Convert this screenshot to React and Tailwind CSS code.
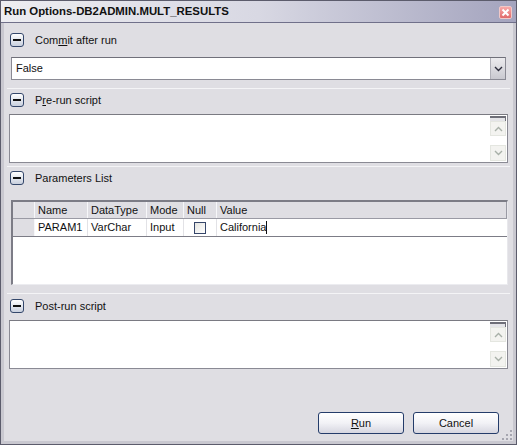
import React from "react";

const font = { fontFamily: '"Liberation Sans", Arial, sans-serif' };

const MinusIcon = () => (
  <div className="w-[14px] h-[14px] rounded-[3px] border border-[#34476b] bg-gradient-to-b from-white to-[#c9d0de] flex items-center justify-center shrink-0">
    <div className="w-[8px] h-[2px] bg-[#111]" />
  </div>
);

const SectionHeader = ({ children, className = "" }) => (
  <div className={`flex items-center h-[18px] pl-[6px] gap-[11px] text-[11px] text-[#111] ${className}`}>
    <MinusIcon />
    <span>{children}</span>
  </div>
);

const Chevron = ({ up, color = "#a8b0a8" }) => (
  <svg width="9" height="6" viewBox="0 0 9 6">
    <path d={up ? "M1 5 L4.5 1.5 L8 5" : "M1 1 L4.5 4.5 L8 1"} fill="none" stroke={color} strokeWidth="1.4" />
  </svg>
);

const ScrollBox = ({ className = "" }) => (
  <div className={`h-[49px] mx-[5px] bg-white border border-[#8a8a94] border-t-[#7a7a82] flex ${className}`}>
    <div className="flex-1" />
    <div className="w-[17px] flex flex-col py-[1px] pr-[1px]">
      <div className="h-[5px] border-t-2 border-r border-[#6e6e78] bg-[#e4e4e8]" />
      <div className="h-[15px] flex items-center justify-center bg-[#f3f3f0] border border-[#e4e6e0]">
        <Chevron up />
      </div>
      <div className="flex-1" />
      <div className="h-[16px] flex items-center justify-center bg-[#f3f3f0] border border-[#e4e6e0]">
        <Chevron />
      </div>
    </div>
  </div>
);

const Button = ({ children }) => (
  <button className="w-[86px] h-[22px] rounded-[3px] border border-[#243c6a] bg-gradient-to-b from-white via-[#f2f2f6] to-[#d6d6e0] text-[11px] text-[#111]">
    {children}
  </button>
);

const cols = [
  { label: "Name", w: "w-[53px]" },
  { label: "DataType", w: "w-[59px]" },
  { label: "Mode", w: "w-[37px]" },
  { label: "Null", w: "w-[33px]" },
];

export default function App() {
  return (
    <div style={font} className="w-[517px] h-[445px] flex flex-col bg-[#dfdee3] border border-[#5c5c6c] overflow-hidden">
      {/* title bar */}
      <div className="h-[22px] flex items-center justify-between pl-[3px] pr-[4px] bg-gradient-to-r from-[#ededf1] via-[#d8d8e3] to-[#a4a4be] border-b border-[#70708a] shrink-0">
        <span className="text-[11.4px] font-bold text-[#111] pt-[1px]">Run Options-DB2ADMIN.MULT_RESULTS</span>
        <div className="w-[13px] h-[13px] rounded-[2px] bg-gradient-to-b from-[#f7a9a9] to-[#e06a6a] border border-[#f0c8c8] flex items-center justify-center mt-[2px]">
          <svg width="9" height="9" viewBox="0 0 9 9">
            <path d="M1.5 1.5 L7.5 7.5 M7.5 1.5 L1.5 7.5" stroke="white" strokeWidth="2" />
          </svg>
        </div>
      </div>

      {/* body */}
      <div className="flex-1 flex flex-col border-l-[3px] border-r-[3px] border-b-[3px] border-[#c9c8d0] pt-[8px] relative">
        <SectionHeader>
          Com<span className="underline">m</span>it after run
        </SectionHeader>

        <div className="mt-[8px] mx-[7px] h-[23px] bg-white border border-[#8a8a94] border-t-[#70707a] flex items-center">
          <span className="flex-1 pl-[4px] text-[11px] text-[#111]">False</span>
          <div className="w-[15px] h-[21px] bg-gradient-to-b from-[#ecebee] to-[#c9c9d0] border-l border-[#b0b0b8] flex items-center justify-center">
            <Chevron color="#2c2c3c" />
          </div>
        </div>

        <div className="mt-[8px] h-px bg-[#f4f4f6] mx-[3px]" />

        <SectionHeader className="mt-[2px]">
          P<span className="underline">r</span>e-run script
        </SectionHeader>
        <ScrollBox className="mt-[5px]" />

        <div className="mt-[3px] h-px bg-[#f4f4f6] mx-[3px]" />

        <SectionHeader className="mt-[2px]">Parameters List</SectionHeader>

        {/* table */}
        <div className="mt-[13px] ml-[7px] mr-[5px] h-[85px] bg-white border-t-2 border-l-2 border-[#7c7c86] border-r border-r-[#e8e8ec] border-b border-b-[#ececf0] flex flex-col">
          <div className="h-[17px] flex bg-[#dfdee3] border-b border-[#9a9aa4] text-[11px] text-[#111]">
            <div className="w-[22px] border-r border-[#f7f7f9]" />
            {cols.map((c) => (
              <div key={c.label} className={`${c.w} pl-[3px] flex items-center border-r border-[#f7f7f9]`}>
                {c.label}
              </div>
            ))}
            <div className="flex-1 pl-[3px] flex items-center border-r border-[#9a9aa4]">Value</div>
          </div>
          <div className="h-[18px] flex border-b border-[#7c7c86] text-[11px] text-[#111]">
            <div className="w-[22px] bg-[#dfdee3] border-r border-[#f7f7f9]" />
            <div className="w-[53px] pl-[3px] flex items-center border-r border-[#e2e2e6]">PARAM1</div>
            <div className="w-[59px] pl-[3px] flex items-center border-r border-[#e2e2e6]">VarChar</div>
            <div className="w-[37px] pl-[3px] flex items-center border-r border-[#e2e2e6]">Input</div>
            <div className="w-[33px] flex items-center justify-center border-r border-[#e2e2e6]">
              <div className="w-[12px] h-[12px] border border-[#36466a] bg-gradient-to-br from-[#e4e4e0] to-white" />
            </div>
            <div className="flex-1 pl-[3px] flex items-center">
              California<span className="inline-block w-px h-[13px] bg-[#111]" />
            </div>
          </div>
          <div className="flex-1" />
        </div>

        <div className="mt-[8px] h-px bg-[#f4f4f6] mx-[3px]" />

        <SectionHeader className="mt-[3px]">Post-run script</SectionHeader>
        <ScrollBox className="mt-[5px]" />

        <div className="flex-1" />
        <div className="flex justify-end gap-[9px] pr-[14px] pb-[7px]">
          <Button>
            <span className="underline">R</span>un
          </Button>
          <Button>Cancel</Button>
        </div>

        {/* resize grip */}
        <svg className="absolute right-[1px] bottom-[1px]" width="11" height="11" viewBox="0 0 11 11">
          {[[9, 1], [9, 5], [5, 5], [9, 9], [5, 9], [1, 9]].map(([x, y], i) => (
            <rect key={i} x={x} y={y} width="2" height="2" fill="#a6a6b0" />
          ))}
        </svg>
      </div>
    </div>
  );
}
